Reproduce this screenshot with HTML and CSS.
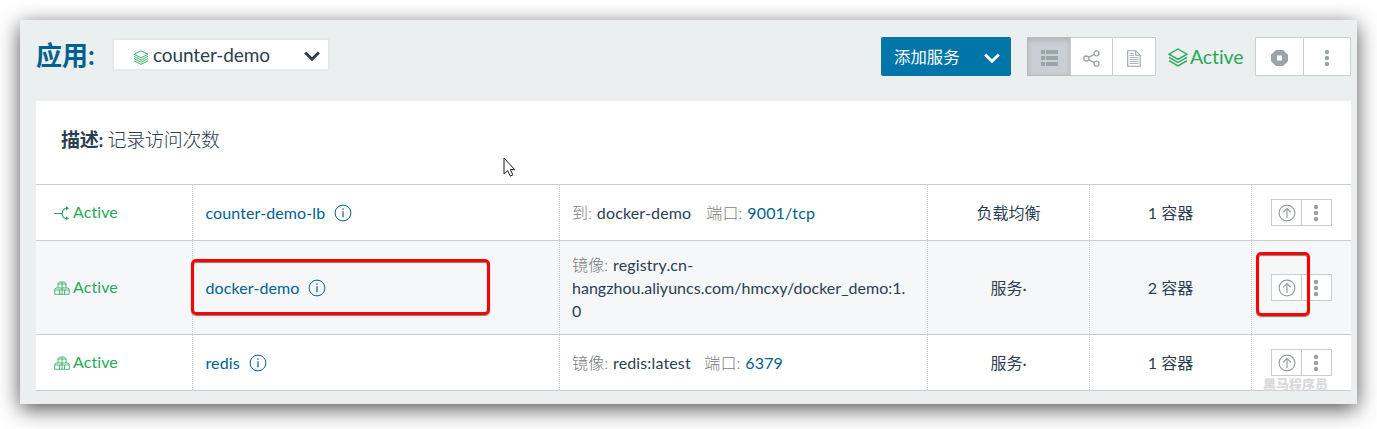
FILE: index.html
```html
<!DOCTYPE html>
<html lang="zh-CN">
<head>
<meta charset="utf-8">
<title>counter-demo</title>
<link rel="stylesheet" href="styles.css">
</head>
<body>
<svg class="defs" width="0" height="0">
  <symbol id="layers" viewBox="0 0 20 19"><path d="M10 1 19 6.200 10 11.400 1 6.200ZM1 9.300l9 5.200 9-5.200M1 12.700l9 5.200 9-5.200" fill="none" stroke="currentColor" stroke-width="1.400"/></symbol>
  <symbol id="layers-thin" viewBox="0 0 16 15"><path d="M8 .8 15 4.300 8 7.800 1 4.300ZM1 6.400l7 3.600 7-3.600M1 8.600l7 3.600 7-3.600M1 10.800l7 3.600 7-3.600" fill="none" stroke="currentColor" stroke-width=".9"/></symbol>
  <symbol id="chevron" viewBox="0 0 16 11"><path d="M1.200 1.500 8 8.200l6.800-6.700" fill="none" stroke="currentColor" stroke-width="3"/></symbol>
  <symbol id="boxes" viewBox="0 0 16 14"><path d="M4 7V2.500L5.500 1h5L12 2.500V7M4 3h8M8 1v6M.7 13.300V8.500L2 7h12l1.300 1.500v4.800ZM.7 9h14.600M5.500 9v4.300M10.500 9v4.300M8 7v6.300" fill="none" stroke="currentColor" stroke-width=".8"/></symbol>
  <symbol id="balance" viewBox="0 0 16 14"><path d="M0 7.500h8M14 2.300h-1C9.500 2.300 8.300 4.500 8.300 7.500s1.200 5 4.700 5h1" fill="none" stroke="currentColor" stroke-width="1.100"/><path d="M12 0l3 2.300-3 2.200ZM12 10.200l3 2.200-3 1.600Z" fill="currentColor"/></symbol>
  <symbol id="info" viewBox="0 0 18 18"><circle cx="9" cy="9" r="7.900" fill="none" stroke="currentColor" stroke-width="1"/><path d="M9 7.300V13.200M9 4.300V5.800" stroke="currentColor" stroke-width="1.200"/></symbol>
  <symbol id="up" viewBox="0 0 18 18"><circle cx="9" cy="9" r="7.900" fill="none" stroke="currentColor" stroke-width="1.200"/><path d="M9 14V4.500M5.200 8.300 9 4.300l3.800 4" fill="none" stroke="currentColor" stroke-width="1.200"/></symbol>
  <symbol id="dots" viewBox="0 0 6 18"><circle cx="3" cy="3" r="2.200" fill="currentColor"/><circle cx="3" cy="9" r="2.200" fill="currentColor"/><circle cx="3" cy="15" r="2.200" fill="currentColor"/></symbol>
</svg>
<main class="window">
  <header class="bar">
    <h1 class="title">应用:</h1>
    <div class="select"><svg class="select-icon"><use href="#layers-thin"/></svg><span>counter-demo</span><svg class="chev"><use href="#chevron"/></svg></div>
    <div class="add"><span>添加服务</span><svg class="chev"><use href="#chevron"/></svg></div>
    <div class="views">
      <div class="view on"><svg width="17" height="16" viewBox="0 0 17 16"><path d="M0 0h4v4H0zM5 0h12v4H5zM0 6h4v4H0zM5 6h12v4H5zM0 12h4v4H0zM5 12h12v4H5z" fill="currentColor"/></svg></div>
      <div class="view"><svg width="17" height="17" viewBox="0 0 17 17"><g fill="none" stroke="currentColor" stroke-width="1.300"><circle cx="3.200" cy="8.500" r="2.500"/><circle cx="13.500" cy="3.300" r="2.500"/><circle cx="13.500" cy="13.700" r="2.500"/><path d="M5.500 7.400 11.200 4.400M5.500 9.600l5.700 3"/></g></svg></div>
      <div class="view"><svg width="14" height="17" viewBox="0 0 14 17"><path d="M.7.7h8l4.500 4.500v11H.7ZM8.700.7v4.500h4.500" fill="none" stroke="currentColor" stroke-width="1.100"/><path d="M2.500 3.500h4.500M2.500 5.500h4.500M2.500 7.500h9M2.500 9.500h9M2.500 11.500h9M2.500 13.500h9" stroke="currentColor" stroke-width=".8" fill="none"/></svg></div>
    </div>
    <div class="state"><svg><use href="#layers"/></svg><span>Active</span></div>
    <div class="actions">
      <div class="action stop"><svg width="17" height="16" viewBox="0 0 17 16"><path fill-rule="evenodd" d="M5 0h7l5 4.700v6.600L12 16H5L0 11.300V4.700ZM6 5.500v5h5v-5Z" fill="currentColor"/></svg></div>
      <div class="action"><svg width="6" height="18"><use href="#dots"/></svg></div>
    </div>
  </header>
  <section class="panel">
    <div class="desc"><b>描述:</b> <span>记录访问次数</span></div>
    <div class="row">
      <div class="status"><svg><use href="#balance"/></svg>Active</div>
      <div class="cell name">counter-demo-lb<svg><use href="#info"/></svg></div>
      <div class="cell"><p class="detail"><i>到:</i> docker-demo<i class="port">端口:</i> <a>9001/tcp</a></p></div>
      <div class="cell mid">负载均衡</div>
      <div class="cell mid">1 容器</div>
      <div class="cell tools"><div class="pair"><span><svg class="up"><use href="#up"/></svg></span><span><svg class="dots"><use href="#dots"/></svg></span></div></div>
    </div>
    <div class="row tall">
      <div class="status"><svg><use href="#boxes"/></svg>Active</div>
      <div class="cell name">docker-demo<svg><use href="#info"/></svg><div class="mark mark-name"></div></div>
      <div class="cell"><p class="detail"><i>镜像:</i> registry.cn-<br><span class="path">hangzhou.aliyuncs.com/hmcxy/docker_demo:1.</span><br>0</p></div>
      <div class="cell mid">服务·</div>
      <div class="cell mid">2 容器</div>
      <div class="cell tools"><div class="pair"><span><svg class="up"><use href="#up"/></svg></span><span><svg class="dots"><use href="#dots"/></svg></span></div><div class="mark mark-up"></div></div>
    </div>
    <div class="row">
      <div class="status"><svg><use href="#boxes"/></svg>Active</div>
      <div class="cell name">redis<svg><use href="#info"/></svg></div>
      <div class="cell"><p class="detail"><i>镜像:</i> redis:latest<i class="port near">端口:</i> <a>6379</a></p></div>
      <div class="cell mid">服务·</div>
      <div class="cell mid">1 容器</div>
      <div class="cell tools"><div class="pair"><span><svg class="up"><use href="#up"/></svg></span><span><svg class="dots"><use href="#dots"/></svg></span></div><div class="watermark">黑马程序员</div></div>
    </div>
  </section>
  <svg class="pointer" width="14" height="21" viewBox="0 0 14 21"><path d="M1 1v16l3.600-3.400 2.700 5.500 2.600-1.200-2.600-5.300h4.400Z" fill="#fff" stroke="#1b1b25" stroke-width="1"/></svg>
</main>
</body>
</html>
```
FILE: styles.css
```css
* { box-sizing: border-box; }
body { margin: 0; height: 429px; padding: 20px; background: #fff; overflow: hidden; font-family: Lato, "Noto Sans CJK SC", sans-serif; font-size: 16px; font-variant-ligatures: none; color: #2c3e50; }
svg { display: block; flex: none; }
.defs { position: absolute; }
.window { position: relative; width: 1337px; height: 384px; padding: 0 6px 0 16px; background: #ebeff0; box-shadow: 0 5px 20px rgba(0,0,0,.68); }
.bar { display: flex; height: 81px; padding-top: 17px; align-items: flex-start; }
.title { margin: 0; width: 76px; font-size: 26px; line-height: 37px; font-weight: 700; color: #00618f; white-space: nowrap; }
.select { display: flex; width: 218px; height: 33px; margin-top: 1px; padding: 0 8px 0 19px; border: 2px solid #e4e8ea; border-radius: 2px; background: #fff; align-items: center; font-size: 19px; letter-spacing: -.1px; }
.select-icon { width: 16px; height: 15px; margin: 6px 4px 0 0; color: #27a957; }
.chev { width: 16px; height: 11px; margin-left: auto; }
.select .chev { margin-top: 4px; }
.add { display: flex; width: 130px; height: 39px; margin-left: 551px; padding: 0 11px 0 13px; border-radius: 2px; background: #0075a8; color: #fff; align-items: center; font-size: 16.4px; line-height: 38px; }
.add .chev { margin-top: 3px; }
.views, .actions { display: flex; height: 39px; border: 1px solid #c9cfd2; background: #fff; border-radius: 1px; color: #9aa5aa; }
.views { width: 129px; margin-left: 16px; }
.view, .action { display: flex; width: 42px; align-items: center; justify-content: center; padding-top: 3px; }
.view + .view, .action + .action { border-left: 1px solid #c9cfd2; }
.view:last-child { flex: 1; }
.view.on { width: 42px; background: #c9cfd2; box-shadow: inset 0 2px 5px rgba(0,0,0,.13), 0 0 0 1px #b5bcbf; }
.state { display: flex; width: 99px; height: 39px; padding-left: 12px; align-items: center; color: #27a957; font-size: 19.500px; letter-spacing: -.1px; }
.state span { margin-top: -1px; }
.state svg { width: 20px; height: 19px; margin: 2px 2px 0 0; }
.actions { width: 96px; }
.action { width: 47px; }
.panel { background: #fff; border-bottom: 1px solid #c9cdd0; }
.desc { height: 83px; padding: 25px 25px; font-size: 19px; line-height: 27px; letter-spacing: -.3px; }
.desc span { font-weight: 300; }
.row { display: grid; grid-template-columns: 156px 367px 368px 162px 162px 100px; height: 56px; border-top: 1px solid #c9cdd0; }
.tall { height: 94px; background: #f5f7f9; }
.status { display: flex; padding: 0 0 2px 18px; align-items: center; color: #27a957; letter-spacing: .1px; }
.status svg { width: 16px; height: 14px; margin: 2px 3px 0 0; }
.cell { position: relative; display: flex; padding-left: 12px; align-items: center; border-left: 1px dotted #c9cdd0; }
.name { padding-left: 12.500px; color: #00618f; letter-spacing: .1px; }
.name svg { width: 18px; height: 18px; margin-left: 9px; }
.detail { margin: 0; line-height: 23px; letter-spacing: .14px; white-space: nowrap; }
.detail i { margin-right: .5px; font-style: normal; font-weight: 300; color: #7d7d7d; }
.path { letter-spacing: .02px; }
.detail .port { margin-left: 15px; }
.detail .near { margin-left: 13.500px; }
.detail a { color: #00618f; }
.mid { padding: 0 0 1px; justify-content: center; }
.tools { padding-left: 19px; }
.pair { display: flex; width: 61px; height: 27px; border: 1px solid #c9cdd0; background: #fff; color: #959fa4; }
.pair span { display: flex; width: 29px; align-items: center; justify-content: center; }
.pair span + span { width: 30px; padding-right: 1px; border-left: 1px solid #c9cdd0; }
.up { width: 18px; height: 18px; }
.dots { width: 6px; height: 18px; }
.mark { position: absolute; z-index: 2; border: 3px solid #f00; border-radius: 5px; box-shadow: 0 1px 1px rgba(0,0,0,.5), inset 0 1px 1px rgba(0,0,0,.5); }
.mark-name { left: -2px; top: 18px; width: 299px; height: 56px; }
.mark-up { left: 4px; top: 11px; width: 54px; height: 64px; }
.watermark { position: absolute; left: 11px; bottom: -1px; font-size: 13px; line-height: 14px; font-weight: 900; color: #d9d9d9; white-space: nowrap; }
.pointer { position: absolute; left: 483px; top: 137px; }
```
